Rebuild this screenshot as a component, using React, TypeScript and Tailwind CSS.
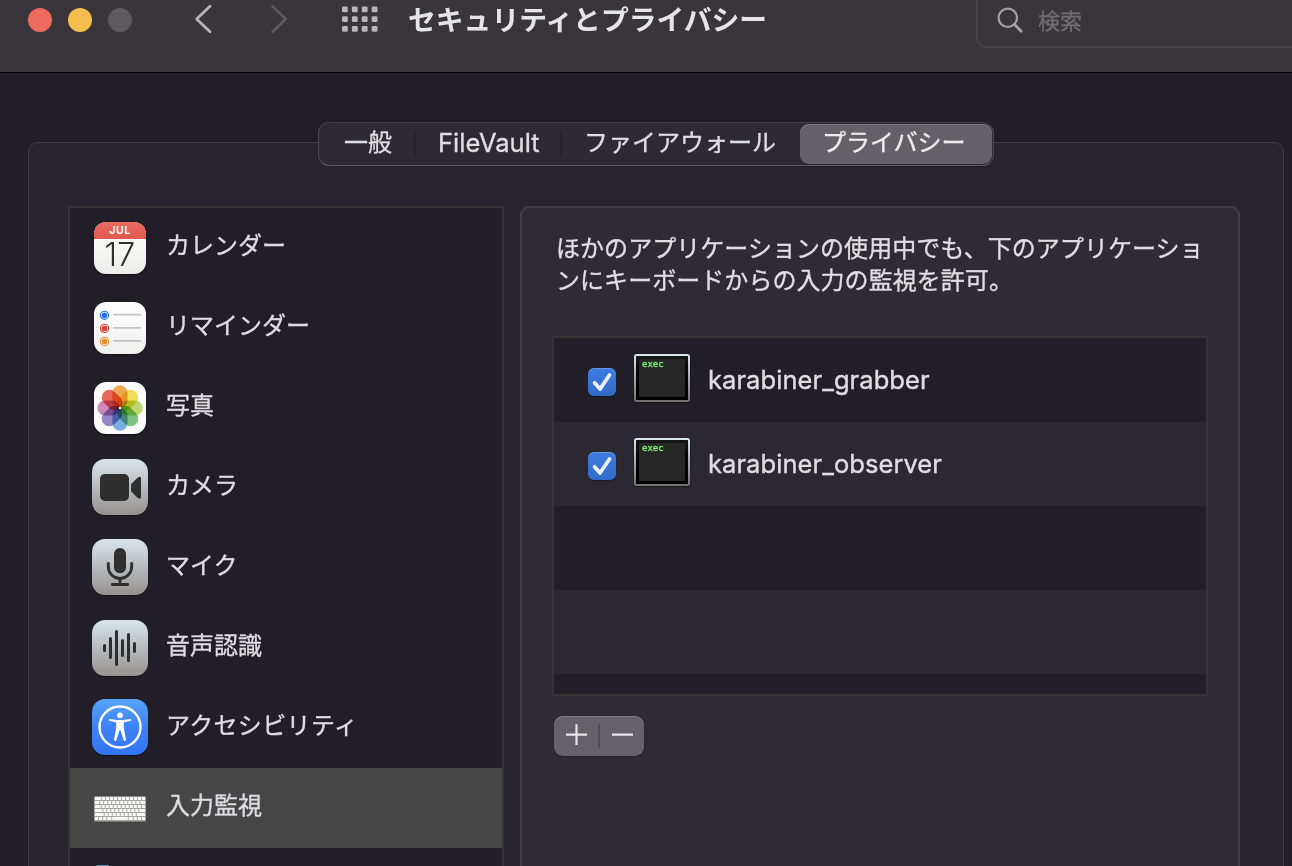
import type { ReactNode } from "react";

function CalendarIcon() {
  return (
    <div className="flex h-[52px] w-[52px] flex-col overflow-hidden rounded-[12px] bg-gradient-to-b from-white to-[#ededeb] shadow-[0_1px_2px_rgba(0,0,0,0.5)]">
      <div className="flex h-[17px] shrink-0 items-center justify-center bg-gradient-to-b from-[#ec6a5e] to-[#dc5a50] pt-px font-['Inter'] text-[10.5px] leading-none font-bold tracking-[0.6px] text-white">
        JUL
      </div>
      <div className="text-center font-['Inter'] text-[32px] leading-[32px] font-light tracking-[0.2px] text-[#2e2e2e]">
        17
      </div>
    </div>
  );
}

const reminderRows = [
  { y: 13.3, color: "#2f74e0" },
  { y: 26.4, color: "#d8453d" },
  { y: 39.4, color: "#df932f" },
];

function RemindersIcon() {
  return (
    <div className="h-[52px] w-[52px] overflow-hidden rounded-[12px] bg-gradient-to-b from-white to-[#f0f0ee] shadow-[0_1px_2px_rgba(0,0,0,0.5)]">
      <svg width="52" height="52" viewBox="0 0 52 52">
        {reminderRows.map((r) => (
          <g key={r.y}>
            <circle cx="10.5" cy={r.y} r="4.1" fill="#fff" stroke={r.color} strokeWidth="1.1" />
            <circle cx="10.5" cy={r.y} r="2.9" fill={r.color} />
            <path d={`M19 ${r.y - 0.6}H47`} stroke="#c2c3c8" strokeWidth="1.8" />
          </g>
        ))}
      </svg>
    </div>
  );
}

const petals = ["#f19a38", "#f0dc3c", "#b4d553", "#6cbc72", "#62a3de", "#8474bd", "#c779ae", "#e5503f"];

function PhotosIcon() {
  return (
    <div className="h-[52px] w-[52px] overflow-hidden rounded-[12px] bg-[#fcfcfc] shadow-[0_1px_2px_rgba(0,0,0,0.5)]">
      <svg width="52" height="52" viewBox="0 0 52 52">
        {petals.map((c, i) => (
          <rect
            key={c}
            x="18.4"
            y="3.3"
            width="15.2"
            height="22.7"
            rx="7.6"
            fill={c}
            opacity="0.85"
            transform={`rotate(${i * 45} 26 26)`}
            style={{ mixBlendMode: "multiply" }}
          />
        ))}
        <circle cx="26" cy="26" r="1.2" fill="#fff" />
      </svg>
    </div>
  );
}

function SilverTile({ children }: { children: ReactNode }) {
  return (
    <div className="h-14 w-14 rounded-[13px] bg-gradient-to-b from-[#d9e5ec] to-[#969390] shadow-[0_1px_1px_rgba(0,0,0,0.4)]">
      <svg width="56" height="56" viewBox="0 0 56 56" fill="none">
        {children}
      </svg>
    </div>
  );
}

function CameraIcon() {
  return (
    <SilverTile>
      <rect x="8" y="15" width="29" height="27" rx="5" fill="#2e2e2e" />
      <path d="M39 25.2 45.8 18.4Q49 16.5 49 19.5V38Q49 41 45.8 39L39 32.3Z" fill="#2e2e2e" />
    </SilverTile>
  );
}

function MicIcon() {
  return (
    <SilverTile>
      <rect x="22" y="9" width="12" height="25.3" rx="6" fill="#2e2e2e" />
      <path
        d="M16.3 24.3V27.5A11.7 12 0 0 0 39.7 27.5V24.3M28 39.5V45.5M20.3 45.5H35.7"
        stroke="#2e2e2e"
        strokeWidth="2.8"
        strokeLinecap="round"
      />
    </SilverTile>
  );
}

function WaveIcon() {
  return (
    <SilverTile>
      <path
        d="M12.5 25.5V30.5M18.5 18.5V37.5M24.5 11.5V44.5M30.5 20.5V35.5M36.5 14.5V40.5M42.5 23.5V31.5"
        stroke="#2e2e2e"
        strokeWidth="3"
        strokeLinecap="round"
      />
    </SilverTile>
  );
}

function AccessibilityIcon() {
  return (
    <div className="h-14 w-14 rounded-[13px] bg-gradient-to-b from-[#56a3f8] via-[#3f82f6] to-[#3174f3] shadow-[0_1px_1px_rgba(0,0,0,0.4)]">
      <svg width="56" height="56" viewBox="0 0 56 56" fill="none">
        <circle cx="28" cy="28" r="20.5" stroke="#fff" strokeWidth="2.4" />
        <circle cx="28" cy="16.3" r="2.9" fill="#fff" />
        <path
          d="M17.3 19.9 25 21.1H31L38.7 19.9Q39.8 21 38.8 21.8L31.8 23.4V29L34 41Q33 42.6 31.8 41.4L28.5 31.5H27.5L24.2 41.4Q23 42.6 22 41L24.2 29V23.4L17.2 21.8Q16.2 21 17.3 19.9Z"
          fill="#fff"
        />
      </svg>
    </div>
  );
}

const keyRows = [
  { y: 1, keys: [6, 3, 3, 3, 3, 3, 3, 3, 3, 3, 3, 3] },
  { y: 5, keys: [4, 3, 3, 3, 3, 3, 3, 3, 3, 3, 3, 4.5] },
  { y: 9, keys: [5.5, 3, 3, 3, 3, 3, 3, 3, 3, 3, 3, 3] },
  { y: 13, keys: [7, 3, 3, 3, 3, 3, 3, 3, 3, 3, 5.5] },
  { y: 17, keys: [8.5, 3, 3, 3, 3, 3, 3, 3, 3, 8] },
  { y: 21, keys: [3, 3, 3, 4, 15, 4, 3, 3, 3] },
];

function KeyboardIcon() {
  return (
    <div className="h-[26px] w-[52px]">
      <svg width="52" height="26" viewBox="0 0 52 26">
        <rect x="0" y="0.3" width="52" height="25.2" rx="1" fill="#a5a5a3" />
        {keyRows.map((row) => {
          const total = row.keys.reduce((a, b) => a + b, 0);
          const scale = (50 - (row.keys.length - 1) * 0.9) / total;
          let x = 1;
          return row.keys.map((k, i) => {
            const w = k * scale;
            const left = x;
            x += w + 0.9;
            return <rect key={`${row.y}-${i}`} x={left} y={row.y} width={w} height="3.1" rx="0.4" fill="#f7f7f6" />;
          });
        })}
      </svg>
    </div>
  );
}

const categories = [
  { label: "カレンダー", icon: <CalendarIcon /> },
  { label: "リマインダー", icon: <RemindersIcon /> },
  { label: "写真", icon: <PhotosIcon /> },
  { label: "カメラ", icon: <CameraIcon />, shift: "-mt-[2px]" },
  { label: "マイク", icon: <MicIcon />, shift: "-mt-[2px]" },
  { label: "音声認識", icon: <WaveIcon /> },
  { label: "アクセシビリティ", icon: <AccessibilityIcon />, shift: "-mt-[2px]", spacing: "tracking-[0.35px]" },
  { label: "入力監視", icon: <KeyboardIcon />, shift: "mt-px", selected: true },
];

function Sidebar() {
  return (
    <div className="h-[700px] w-[436px] shrink-0 border-2 border-[#353334] bg-[#211e27]">
      {categories.map((c) => (
        <div key={c.label} className={`flex h-20 items-center pl-[22px] ${c.selected ? "bg-[#464646]" : ""}`}>
          <div className={`flex w-14 justify-center ${c.shift ?? ""}`}>{c.icon}</div>
          <div
            className={`-mt-[8px] ml-[18px] text-[24px] leading-9 text-[#dedde0] [-webkit-text-stroke:0.35px] ${c.spacing ?? ""}`}
          >
            {c.label}
          </div>
        </div>
      ))}
      <div className="flex h-20 items-start pt-[17px] pl-[26px]">
        <div className="h-10 w-[13px] rounded-t-[1px] bg-[#5695c2]" />
      </div>
    </div>
  );
}

function ExecIcon() {
  return (
    <div className="h-12 w-14 rounded-[3px] bg-gradient-to-b from-[#dbe8f0] to-[#73706f] p-[2px] shadow-[0_1px_2px_rgba(0,0,0,0.4)]">
      <div className="h-full bg-gradient-to-b from-[#171717] to-black p-[3px]">
        <div className="h-[38px] bg-[#262626] pt-[1px] pl-[3px] font-['DejaVu_Sans_Mono'] text-[9px] leading-[9px] text-[#7cee70] [-webkit-text-stroke:0.4px]">
          exec
        </div>
      </div>
    </div>
  );
}

function Checkbox() {
  return (
    <div className="mt-[4px] h-7 w-7 rounded-[6px] bg-gradient-to-b from-[#3f7ce0] to-[#316bc9] shadow-[inset_0_1px_0_rgba(255,255,255,0.2),0_1px_1px_rgba(0,0,0,0.3)]">
      <svg width="28" height="28" viewBox="0 0 28 28" fill="none">
        <path d="M6.5 14.8 12 21 21.5 7" stroke="#e8eefa" strokeWidth="3.8" strokeLinecap="round" strokeLinejoin="round" />
      </svg>
    </div>
  );
}

function AppRow({ name, striped }: { name: string; striped?: boolean }) {
  return (
    <div className={`flex h-[84px] items-center pl-[34px] ${striped ? "bg-[#2b2831]" : ""}`}>
      <Checkbox />
      <div className="-mt-[4px] ml-[18px]">
        <ExecIcon />
      </div>
      <div className="ml-[18px] font-['Inter'] text-[25.5px] leading-8 tracking-[0.07px] text-[#dedde0] [-webkit-text-stroke:0.4px]">
        {name}
      </div>
    </div>
  );
}

function Detail() {
  return (
    <div className="ml-4 h-[700px] w-[720px] shrink-0 rounded-[9px] border-2 border-[#403d46] bg-[#2e2b35]">
      <p className="mt-[23px] ml-[34px] w-[670px] text-[24px] leading-8 tracking-[0.05px] text-[#dfdee1] [-webkit-text-stroke:0.35px]">
        ほかのアプリケーションの使用中でも、下のアプリケーショ
        <br />
        ンにキーボードからの入力の監視を許可。
      </p>
      <div className="mt-[41px] ml-[30px] h-[360px] w-[656px] border-2 border-[#373435] bg-[#211e27]">
        <AppRow name="karabiner_grabber" />
        <AppRow name="karabiner_observer" striped />
        <div className="h-[84px]" />
        <div className="h-[84px] bg-[#2b2831]" />
      </div>
      <div className="mt-[20px] ml-8 flex h-10 w-[90px] items-center rounded-[9px] bg-[#646168] shadow-[inset_0_1px_0_#7d7a81,0_1px_2px_rgba(0,0,0,0.3)]">
        <svg width="90" height="40" viewBox="0 0 90 40" fill="none">
          <path d="M12 18.7H33M22.5 8.2V29M58 18.7H79" stroke="#e6e5e8" strokeWidth="2.2" />
          <path d="M45 8V32" stroke="#4f4c54" strokeWidth="2" />
        </svg>
      </div>
    </div>
  );
}

function TitleBar() {
  return (
    <header className="flex h-[73px] items-start border-b border-black bg-[#39353b]">
      <div className="mt-2 ml-7 flex gap-4">
        <div className="h-6 w-6 rounded-full bg-[#ec6a5e]" />
        <div className="h-6 w-6 rounded-full bg-[#f4be4f]" />
        <div className="h-6 w-6 rounded-full bg-[#5c595f]" />
      </div>
      <svg className="ml-[60px] shrink-0" width="100" height="40" viewBox="0 0 100 40" fill="none" strokeWidth="2.7" strokeLinecap="round" strokeLinejoin="round">
        <path d="M18 6.2 4.6 19 18 31.8" stroke="#b8b5bb" />
        <path d="M80.5 6.2 93.9 19 80.5 31.8" stroke="#5c5960" />
      </svg>
      <svg className="ml-[50px] shrink-0" width="36" height="36" viewBox="0 0 36 36" fill="#b8b5bb">
        {Array.from({ length: 12 }, (_, i) => (
          <rect key={i} x={(i % 4) * 9.9} y={6.4 + Math.floor(i / 4) * 9.8} width="5.8" height="5.8" rx="1.3" />
        ))}
      </svg>
      <h1 className="ml-[30px] w-[568px] shrink-0 text-[27.8px] leading-9 font-bold whitespace-nowrap text-[#e5e4e6]">
        セキュリティとプライバシー
      </h1>
      <div className="-mt-2 flex h-14 w-[340px] shrink-0 items-center rounded-[10px] border-2 border-[#47444a] pl-[18px]">
        <svg width="30" height="30" viewBox="0 0 30 30" fill="none" stroke="#a4a1a7" strokeLinecap="round">
          <circle cx="11.8" cy="12.8" r="9.2" strokeWidth="2.2" />
          <path d="M18.8 19.8 25.2 26.2" strokeWidth="2.8" />
        </svg>
        <span className="-mt-[2px] ml-[12px] text-[22px] leading-8 text-[#706d73] [-webkit-text-stroke:0.3px]">検索</span>
      </div>
    </header>
  );
}

function Tabs() {
  return (
    <nav className="relative z-10 ml-[318px] flex h-11 w-[676px] items-center rounded-[11px] border border-t-[#403d46] border-r-[#4b4851] border-b-[#5a5760] border-l-[#4b4851] bg-[#2d2a33] text-[24px] leading-9 whitespace-nowrap text-[#dfdee1] [-webkit-text-stroke:0.35px]">
      <div className="w-[95px] pb-[6px] pl-[25px]">一般</div>
      <div className="h-6 w-0.5 bg-[#27242d]" />
      <div className="w-[144px] pb-[3px] pl-[22px] font-['Inter'] text-[25.5px]">FileVault</div>
      <div className="h-6 w-0.5 bg-[#27242d]" />
      <div className="w-[238px] pb-[6px] pl-[22px]">ファイアウォール</div>
      <div className="h-10 w-[192px] rounded-[9px] bg-[#636067] pl-[22px] leading-[34px] text-[#ecebed] shadow-[inset_0_1px_0_#7d7a81]">
        プライバシー
      </div>
    </nav>
  );
}

export default function App() {
  return (
    <div className="h-[866px] w-[1292px] overflow-hidden bg-[#211e28] font-['Noto_Sans_CJK_JP',sans-serif]">
      <TitleBar />
      <main className="pt-[49px]">
        <Tabs />
        <section className="-mt-6 ml-7 flex h-[760px] w-[1256px] rounded-[10px] border border-[#403d46] bg-[#27242e] pt-[63px] pl-[39px]">
          <Sidebar />
          <Detail />
        </section>
      </main>
    </div>
  );
}
